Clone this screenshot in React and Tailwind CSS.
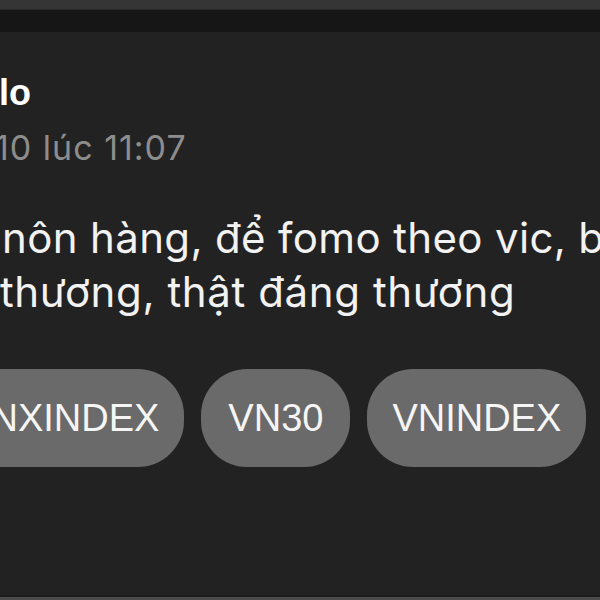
import React from 'react';

const tags = ['HNXINDEX', 'VN30', 'VNINDEX'];

function App() {
  return (
    <div className="w-[600px] h-[600px] overflow-hidden bg-[#222222] flex flex-col font-['Liberation_Sans',Arial,sans-serif]">
      {/* Top bars */}
      <div className="h-[10px] bg-[#353535] border-b border-[#2a2a2a] shrink-0" />
      <div className="h-[22px] bg-[#161616] shrink-0" />

      {/* Post header */}
      <div className="mt-[39px] h-[44px] leading-[44px] text-[36px] font-bold text-white whitespace-nowrap ml-[-1px]">
        lo
      </div>
      <div className="mt-[13px] h-[40px] leading-[40px] text-[34px] text-[#8d8d8d] whitespace-nowrap ml-[-5px] font-['Inter',sans-serif] tracking-[1px]">
        10 lúc 11:07
      </div>

      {/* Body */}
      <div className="mt-[43px] text-[42px] leading-[54px] text-[#f2f2f2] whitespace-nowrap font-['Inter',sans-serif]">
        <div className="ml-[2px] tracking-[0.35px]">nôn hàng, để fomo theo vic, bán</div>
        <div className="tracking-[0.6px]">thương, thật đáng thương</div>
      </div>

      {/* Tags */}
      <div className="mt-[50px] flex gap-[17px] ml-[-62px] whitespace-nowrap">
        {tags.map((tag) => (
          <div
            key={tag}
            className="h-[98px] min-w-[149px] px-[25px] flex items-center justify-center rounded-[46px] bg-[#6a6a6a] text-[38px] text-[#f5f5f5] shrink-0"
          >
            {tag}
          </div>
        ))}
      </div>

      <div className="mt-auto h-[5px] shrink-0 flex flex-col">
        <div className="h-[2px] bg-[#1c1c1c]" />
        <div className="h-[3px] bg-[#4a4a4a]" />
      </div>
    </div>
  );
}

export default App;
